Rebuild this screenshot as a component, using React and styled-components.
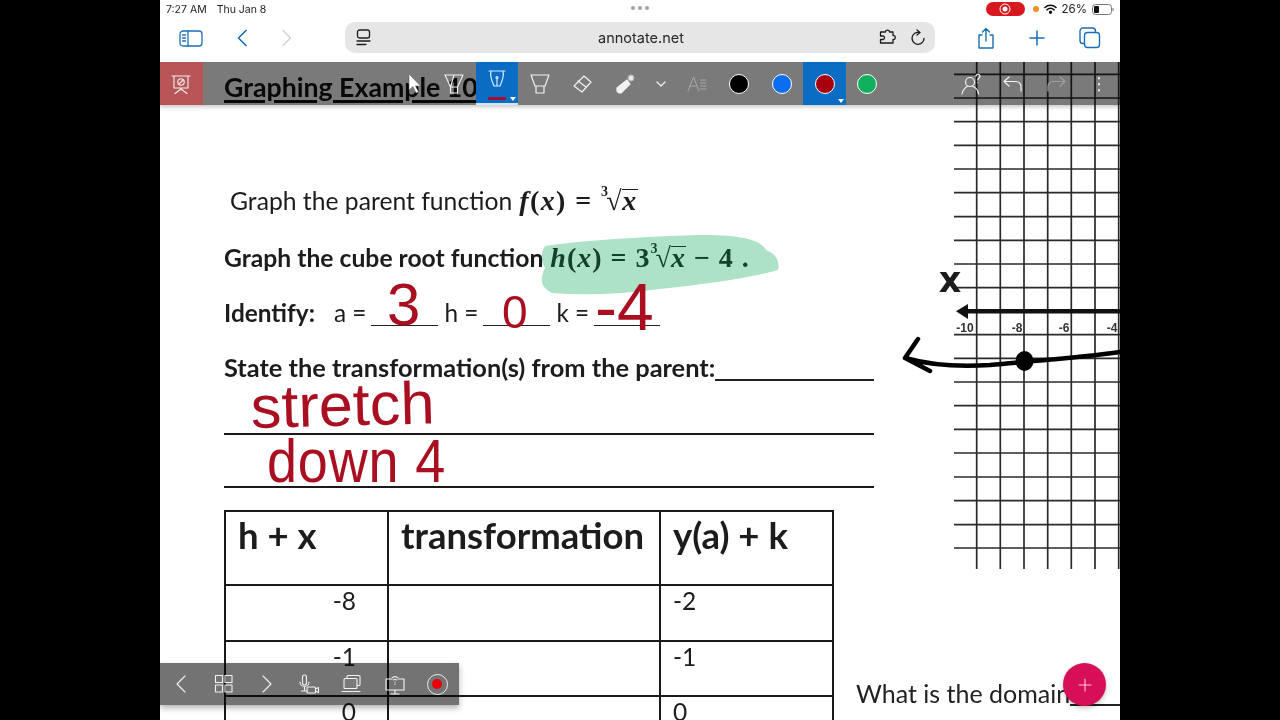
import React from "react";
import styled, { createGlobalStyle } from "styled-components";

const GlobalStyle = createGlobalStyle`
  html, body { margin: 0; padding: 0; background: #000; }
  body { font-family: "Lato", "Liberation Sans", sans-serif; }
`;

const Stage = styled.div`
  width: 1280px;
  height: 720px;
  background: #000;
  display: flex;
  justify-content: center;
  overflow: hidden;
`;

const Tablet = styled.div`
  position: relative;
  width: 960px;
  height: 720px;
  background: #fff;
  overflow: hidden;
  display: flex;
  flex-direction: column;
`;

/* ---------- iPad chrome ---------- */

const StatusBar = styled.div`
  flex: none;
  height: 18px;
  padding: 0 6px;
  display: flex;
  align-items: center;
  justify-content: space-between;
  font-family: "Inter", "Liberation Sans", sans-serif;
  font-size: 10.5px;
  color: #1c1c1c;
  position: relative;
`;

const StatusLeft = styled.div`
  display: flex;
  gap: 10px;
`;

const StatusRight = styled.div`
  display: flex;
  align-items: center;
  gap: 5px;
  font-size: 11.5px;
`;

const Dots = styled.div`
  position: absolute;
  left: 471px;
  top: 6px;
  display: flex;
  gap: 3px;
  span {
    width: 4px;
    height: 4px;
    border-radius: 50%;
    background: #a5a5a5;
  }
`;

const RecPill = styled.div`
  width: 39px;
  height: 14px;
  border-radius: 7px;
  background: #d8171f;
  display: flex;
  align-items: center;
  justify-content: center;
  margin-right: 3px;
`;

const OrangeDot = styled.div`
  width: 6px;
  height: 6px;
  border-radius: 50%;
  background: #f0921e;
`;

const NavBar = styled.div`
  flex: none;
  height: 44px;
  display: flex;
  align-items: flex-start;
  padding-top: 4px;
  box-sizing: border-box;
  color: #1b6fb8;
`;

const NavIcons = styled.div`
  width: 185px;
  height: 31px;
  display: flex;
  align-items: center;
  padding-left: 19px;
  gap: 33px;
  box-sizing: border-box;
`;

const AddressPill = styled.div`
  width: 590px;
  height: 31px;
  border-radius: 10px;
  background: #e6e6e6;
  display: grid;
  grid-template-columns: 1fr auto 1fr;
  align-items: center;
  padding: 0 9px 0 11px;
  box-sizing: border-box;
  color: #1f1f1f;
`;

const Url = styled.span`
  font-family: "Inter", "Liberation Sans", sans-serif;
  font-size: 14.5px;
  color: #262626;
`;

const PillGroup = styled.div`
  display: flex;
  align-items: center;
  justify-content: flex-end;
  gap: 10px;
`;

const PillStart = styled.div`
  display: flex;
  align-items: center;
`;

const NavRight = styled.div`
  flex: 1;
  height: 31px;
  display: flex;
  align-items: center;
  justify-content: space-between;
  padding: 0 19px 0 42px;
`;

/* ---------- annotate toolbar ---------- */

const AnnotateBar = styled.div`
  position: absolute;
  left: 0;
  top: 62px;
  width: 960px;
  height: 43px;
  display: flex;
  background: rgba(0, 0, 0, 0.52);
  box-shadow: 0 2px 4px rgba(0, 0, 0, 0.22);
`;

const BarCell = styled.div`
  position: relative;
  flex: none;
  box-sizing: border-box;
  width: ${(p) => p.$width || 42.65}px;
  height: 100%;
  display: flex;
  align-items: center;
  justify-content: center;
  background: ${(p) => (p.$active ? "#0a6cc2" : "transparent")};
  border-bottom: ${(p) => (p.$underline ? "2px solid #cfe6fb" : "none")};
`;

const PresentCell = styled(BarCell)`
  background: #b85556;
  margin-right: 230.5px;
`;

const RightTools = styled.div`
  margin-left: auto;
  display: flex;
`;

const PenNib = styled.div`
  margin-top: -5px;
  display: flex;
`;

const PenColor = styled.div`
  position: absolute;
  left: 12px;
  bottom: 3px;
  width: 18px;
  height: 3px;
  background: #a20f33;
`;

const Caret = styled.div`
  position: absolute;
  right: 2px;
  bottom: 2px;
  width: 0;
  height: 0;
  border-left: 3px solid transparent;
  border-right: 3px solid transparent;
  border-top: 4px solid #fff;
`;

const Swatch = styled.div`
  width: 18px;
  height: 18px;
  border-radius: 50%;
  background: ${(p) => p.$color};
  border: 1.5px solid #fff;
`;

const Cursor = styled.svg`
  position: absolute;
  left: 248px;
  top: 73px;
`;

/* ---------- worksheet ---------- */

const Worksheet = styled.div`
  position: relative;
  flex: 1;
  min-height: 0;
  display: flex;
  padding-left: 64px;
  color: #1c1c1c;
`;

const LeftCol = styled.div`
  width: 632px;
  flex: none;
`;

const RightCol = styled.div`
  flex: none;
  width: 264px;
`;

const TextRow = styled.div`
  height: 30px;
  line-height: 30px;
  white-space: nowrap;
  display: flex;
  align-items: baseline;
  font-size: ${(p) => p.$size || 24.7}px;
  font-weight: ${(p) => (p.$bold ? 700 : 400)};
  margin-top: ${(p) => p.$top || 0}px;
  margin-left: ${(p) => p.$left || 0}px;
`;

const Title = styled.div`
  margin-top: 10px;
  height: 30px;
  line-height: 30px;
  font-size: 26.7px;
  font-weight: 700;
  color: #111;
  text-decoration: underline;
  text-decoration-thickness: 3px;
  text-underline-offset: 3px;
  white-space: nowrap;
`;

const MathText = styled.span`
  font-family: "Liberation Serif", "DejaVu Serif", serif;
  font-weight: 700;
  font-size: 28px;
  margin-left: 7px;
  letter-spacing: ${(p) => p.$spacing || 1}px;
  color: ${(p) => p.$color || "inherit"};
  white-space: pre;
  i {
    font-style: italic;
  }
`;

const Radical = styled.span`
  display: inline-flex;
  align-items: baseline;
  font-style: normal;
`;

const RootIndex = styled.span`
  font-size: 14px;
  position: relative;
  top: -14px;
  margin-right: -3px;
`;

const RootBar = styled.i`
  border-top: 1.5px solid currentColor;
  line-height: 22px;
  margin-left: -1px;
`;

const Blank = styled.span`
  display: inline-block;
  flex: none;
  width: ${(p) => p.$width}px;
  border-bottom: ${(p) => p.$thick || 1.5}px solid #222;
  height: 20px;
  margin: 0 ${(p) => p.$gap || 0}px 0 ${(p) => p.$lead || 0}px;
  transform: translateY(${(p) => p.$drop || 4}px);
`;

const Spacer = styled.span`
  display: inline-block;
  width: ${(p) => p.$width}px;
`;

const Rule = styled.div`
  width: 650px;
  height: 2px;
  background: #1a1a1a;
  margin-top: 51px;
`;

const SheetTable = styled.div`
  width: 610px;
  margin-top: 22px;
  display: grid;
  grid-template-columns: 163px 272px 173px;
  grid-template-rows: 74px;
  grid-auto-rows: 55.5px;
  border-top: 2px solid #1a1a1a;
  border-left: 2px solid #1a1a1a;
  box-sizing: border-box;
`;

const HeadCell = styled.div`
  box-sizing: border-box;
  padding: 3px 0 0 12px;
  font-size: 36.5px;
  font-weight: 700;
  line-height: 40px;
  white-space: nowrap;
  border-right: 2px solid #1a1a1a;
  border-bottom: 2px solid #1a1a1a;
`;

const BodyCell = styled.div`
  box-sizing: border-box;
  padding: ${(p) => (p.$right ? "0 31px 0 0" : "0 0 0 12px")};
  text-align: ${(p) => (p.$right ? "right" : "left")};
  font-size: 24.5px;
  line-height: 30px;
  border-right: 2px solid #1a1a1a;
  border-bottom: 2px solid #1a1a1a;
`;

const GraphSvg = styled.svg`
  display: block;
  margin-left: 44px;
`;

const DomainRow = styled.div`
  margin-top: 108px;
  height: 30px;
  line-height: 30px;
  font-size: 25px;
  white-space: nowrap;
  color: #222;
  display: flex;
`;

const DomainBlank = styled.span`
  display: block;
  width: 80px;
  height: 26px;
  border-bottom: 2px solid #222;
`;

const Highlight = styled.svg`
  position: absolute;
  left: 375px;
  top: 170px;
  mix-blend-mode: multiply;
`;

/* handwriting that sits over the printed sheet */
const Ink = styled.span`
  position: absolute;
  left: ${(p) => p.$x}px;
  top: ${(p) => p.$y}px;
  font-family: "Liberation Sans", sans-serif;
  font-size: ${(p) => p.$size}px;
  line-height: 1;
  letter-spacing: ${(p) => p.$spacing || 0}px;
  color: #a90f20;
  white-space: pre;
  transform: scale(${(p) => p.$sx || 1}, ${(p) => p.$sy || 1}) rotate(${(p) => p.$rot || 0}deg);
  transform-origin: left top;
`;

/* ---------- bottom tools ---------- */

const BottomBar = styled.div`
  position: absolute;
  left: 0;
  top: 663px;
  width: 299px;
  height: 42px;
  display: flex;
  background: rgba(0, 0, 0, 0.55);
  box-shadow: 0 3px 6px rgba(0, 0, 0, 0.3);
`;

const BottomCell = styled.div`
  flex: none;
  width: 42.7px;
  height: 100%;
  display: flex;
  align-items: center;
  justify-content: center;
`;

const RecordOuter = styled.div`
  width: 19px;
  height: 19px;
  border: 1.2px solid #eee;
  border-radius: 50%;
  display: flex;
  align-items: center;
  justify-content: center;
  &::after {
    content: "";
    width: 10px;
    height: 10px;
    border-radius: 50%;
    background: #e8000c;
  }
`;

const Fab = styled.div`
  position: absolute;
  left: 903px;
  top: 663px;
  width: 43px;
  height: 43px;
  border-radius: 50%;
  background: #d60f58;
  box-shadow: 0 2px 5px rgba(0, 0, 0, 0.25);
  display: flex;
  align-items: center;
  justify-content: center;
`;

/* ---------- icons ---------- */

const Icon = ({ size = 24, w, h, color = "currentColor", sw = 1.5, children }) => (
  <svg width={w || size} height={h || size} viewBox={`0 0 ${w || size} ${h || size}`} fill="none" stroke={color} strokeWidth={sw} strokeLinecap="round" strokeLinejoin="round">
    {children}
  </svg>
);

const white = "#f2f2f2";

const CubeRoot = ({ v = "x" }) => (
  <Radical>
    <RootIndex>3</RootIndex>√<RootBar>{v}</RootBar>
  </Radical>
);

const tableRows = [
  ["-8", "-2"],
  ["-1", "-1"],
  ["0", "0"],
];

const hLines = [74.3, 98, 121.7, 145.3, 169, 192.7, 216.7, 240.3, 264, 287.7, 334.7, 358.3, 382, 405.7, 429.4, 453, 477, 500.7, 524.7, 548];
const vLines = [976.7, 1000.3, 1024, 1047.7, 1071.3, 1095, 1118.7];
const axisLabels = [["-10", 965], ["-8", 1017], ["-6", 1064], ["-4", 1112]];

const Graph = () => (
  <GraphSvg width="220" height="508" viewBox="900 62 220 508">
    <g stroke="#2a2a2a" strokeWidth="1.7">
      {hLines.map((y) => <line key={y} x1="954" x2="1120" y1={y} y2={y} />)}
      {vLines.map((x) => <line key={x} x1={x} x2={x} y1="62" y2="569" />)}
    </g>
    <path d="M956 311.3 L968 304 V319 Z" fill="#111" />
    <line x1="965" x2="1120" y1="311.3" y2="311.3" stroke="#111" strokeWidth="4.5" />
    <text x="950" y="292" textAnchor="middle" fontFamily="DejaVu Sans" fontWeight="700" fontSize="35" fill="#1c1c1c">x</text>
    {axisLabels.map(([t, x]) => (
      <text key={t} x={x} y="332" textAnchor="middle" fontFamily="Liberation Sans" fontWeight="700" fontSize="12" fill="#333">{t}</text>
    ))}
    <path d="M918 339 L905 358 L930 371 M905 358 C930 365 960 367 990 365 C1030 361 1080 358 1120 352" stroke="#000" strokeWidth="4.5" fill="none" strokeLinecap="round" strokeLinejoin="round" />
    <ellipse cx="1024.5" cy="361" rx="9" ry="10" fill="#000" />
  </GraphSvg>
);

export default function App() {
  return (
    <Stage>
      <GlobalStyle />
      <Tablet>
        <StatusBar>
          <StatusLeft>
            <span>7:27 AM</span>
            <span>Thu Jan 8</span>
          </StatusLeft>
          <Dots><span /><span /><span /></Dots>
          <StatusRight>
            <RecPill>
              <svg width="12" height="12" viewBox="0 0 12 12" fill="none">
                <circle cx="6" cy="6" r="5" stroke="#fff" strokeWidth="1" />
                <circle cx="6" cy="6" r="2.5" fill="#fff" />
              </svg>
            </RecPill>
            <OrangeDot />
            <svg width="13" height="10" viewBox="0 0 13 10" fill="none" stroke="#111" strokeWidth="1.6" strokeLinecap="round">
              <path d="M1 3.5a8 8 0 0 1 11 0M3 5.8a5 5 0 0 1 7 0" />
              <circle cx="6.5" cy="8.3" r="0.9" fill="#111" />
            </svg>
            <span>26%</span>
            <svg width="22" height="11" viewBox="0 0 22 11" fill="none">
              <rect x="0.5" y="0.5" width="19" height="10" rx="3" stroke="#777" />
              <rect x="2" y="2" width="5" height="7" rx="1" fill="#111" />
              <path d="M21 4v3" stroke="#888" strokeWidth="1.2" />
            </svg>
          </StatusRight>
        </StatusBar>

        <NavBar>
          <NavIcons>
            <Icon w={24} h={18} sw={1.3}>
              <rect x="1" y="2" width="22" height="15" rx="3" />
              <path d="M9 2v15M3.5 6h3M3.5 9h3M3.5 12h3" />
            </Icon>
            <Icon w={12} h={18} sw={1.7}>
              <path d="M10 1.5L2.5 9l7.5 7.5" />
            </Icon>
            <Icon w={12} h={18} sw={1.4} color="#d2d2d2">
              <path d="M2 1.5L9.5 9 2 16.5" />
            </Icon>
          </NavIcons>
          <AddressPill>
            <PillStart>
              <Icon w={15} h={17} sw={1.3} color="#1c1c1c">
                <rect x="1.5" y="1" width="12" height="8" rx="2" />
                <path d="M1 12h13M1 15.5h9" />
              </Icon>
            </PillStart>
            <Url>annotate.net</Url>
            <PillGroup>
              <Icon w={20} h={17} sw={1.3} color="#1c1c1c">
                <path d="M1.5 3h5c0-2.500 4-2.500 4 0h3.500v3.500c3-.5 3 4.500 0 4v3.500h-12.500v-3.500h3a2 2 0 0 0 0-3.500h-3z" />
              </Icon>
              <Icon w={17} h={18} sw={1.3} color="#1c1c1c">
                <path d="M10.500 3.500A6 6 0 1 0 15 9.500M8 1l3 2.500-3 2.500" />
              </Icon>
            </PillGroup>
          </AddressPill>
          <NavRight>
            <Icon w={18} h={22} sw={1.4}>
              <path d="M5 8H2v13h14V8h-3M9 14V1.500M5.500 5L9 1.500 12.500 5" />
            </Icon>
            <Icon w={18} h={18} sw={1.5}>
              <path d="M9 2v14M2 9h14" />
            </Icon>
            <Icon w={22} h={22} sw={1.4}>
              <rect x="5.500" y="5.500" width="15" height="15" rx="3" />
              <path d="M5.500 16.500H4a3 3 0 0 1-3-3V4a3 3 0 0 1 3-3h9.500a3 3 0 0 1 3 3v1.500" />
            </Icon>
          </NavRight>
        </NavBar>

        <Worksheet>
          <LeftCol>
            <Title>Graphing Example 10</Title>
            <TextRow $top={84} $left={6}>
              Graph the parent function
              <MathText $spacing={1.4}><i>f</i>(<i>x</i>) = <CubeRoot /></MathText>
            </TextRow>
            <TextRow $top={27} $bold>
              Graph the cube root function
              <MathText $color="#1d4a34"><i>h</i>(<i>x</i>) = 3<CubeRoot /> − 4 .</MathText>
            </TextRow>
            <TextRow $top={25} $size={24.4}>
              <b>Identify:</b>
              <Spacer $width={19} />
              a =
              <Blank $width={67} $lead={5} $gap={6} />
              h =
              <Blank $width={67} $lead={5} $gap={6} />
              k =
              <Blank $width={66} $lead={5} />
            </TextRow>
            <TextRow $top={24} $bold $size={25.4}>
              State the transformation(s) from the parent:
              <Blank $width={159} $thick={2} />
            </TextRow>
            <Rule />
            <Rule />
            <SheetTable>
              <HeadCell>h + x</HeadCell>
              <HeadCell>transformation</HeadCell>
              <HeadCell>y(a) + k</HeadCell>
              {tableRows.map(([x, y]) => (
                <React.Fragment key={x}>
                  <BodyCell $right>{x}</BodyCell>
                  <BodyCell />
                  <BodyCell>{y}</BodyCell>
                </React.Fragment>
              ))}
            </SheetTable>
          </LeftCol>
          <RightCol>
            <Graph />
            <DomainRow>
              What is the domain
              <DomainBlank />
            </DomainRow>
          </RightCol>

          <Highlight width="250" height="70" viewBox="535 232 250 70">
            <path d="M545 246 Q600 238 700 235 Q758 234 766 250 Q781 256 778 270 Q740 281 660 289 Q600 297 552 293 Q536 286 545 268 Q538 256 545 246 Z" fill="#aee2c6" />
          </Highlight>
          <Ink $x={227} $y={213} $size={60}>3</Ink>
          <Ink $x={342} $y={227} $size={46}>0</Ink>
          <Ink $x={435} $y={212} $size={66}>-4</Ink>
          <Ink $x={90} $y={316} $size={60} $sx={1.02} $rot={-1.5}>stretch</Ink>
          <Ink $x={107} $y={368} $size={62} $sx={0.87} $spacing={1}>down 4</Ink>
        </Worksheet>

        <AnnotateBar>
          <PresentCell>
            <Icon w={24} h={24} color={white} sw={1.1}>
              <path d="M3 4h18M5 4v12h14V4M12 16v1M12 17l-6 4.500M12 17l6 4.500" />
              <circle cx="12" cy="10" r="3.200" />
              <path d="M10 12l4-4" />
            </Icon>
          </PresentCell>
          <BarCell>
            <Icon w={24} h={24} color={white} sw={1.1}>
              <path d="M3 3h18l-5.500 12h-7zM8.500 15v6h7v-6M12 3l-3.500 12" />
            </Icon>
          </BarCell>
          <BarCell $active $underline>
            <PenNib>
              <Icon w={24} h={24} color="#d8ecfb" sw={1.2}>
                <path d="M4 3h16M6 3.500C4.500 8 7 13 9 18h6c2-5 4.500-10 3-14.500M12 18V10" />
                <circle cx="12" cy="9.500" r="1" />
              </Icon>
            </PenNib>
            <PenColor />
            <Caret />
          </BarCell>
          <BarCell>
            <Icon w={24} h={24} color={white} sw={1.2}>
              <path d="M3 3h18l-4 11H7zM8 14v7h8v-7" />
            </Icon>
          </BarCell>
          <BarCell>
            <Icon w={24} h={24} color={white} sw={1.2}>
              <path d="M14 4l7 6-9 10-8-6zM8 9l8 6" />
            </Icon>
          </BarCell>
          <BarCell>
            <Icon w={24} h={24} color={white} sw={1.2}>
              <path d="M4 16l10-8 3 4-9 9H6l-2-2z" fill={white} />
              <path d="M18 3v6M15 6h6M16 4l4 4M20 4l-4 4" />
            </Icon>
          </BarCell>
          <BarCell $width={29}>
            <Icon w={10} h={6} color={white} sw={1.2}>
              <path d="M1 1l4 4 4-4" />
            </Icon>
          </BarCell>
          <BarCell>
            <Icon w={20} h={18} color="#a8a8a8" sw={1}>
              <path d="M1 16L6.500 2 12 16M3 11h7M13.500 5H19M13.500 8H19M13.500 11H19M13.500 14H19" />
            </Icon>
          </BarCell>
          <BarCell><Swatch $color="#000" /></BarCell>
          <BarCell><Swatch $color="#0b6ef0" /></BarCell>
          <BarCell $active>
            <Swatch $color="#a6000c" />
            <Caret />
          </BarCell>
          <BarCell><Swatch $color="#10b05c" /></BarCell>
          <RightTools>
            <BarCell>
              <Icon w={22} h={22} color={white} sw={1.2}>
                <circle cx="10" cy="9" r="4.500" />
                <path d="M2 21c1-5 4-7 6-8M12 13c3 1 6 3 6.500 8M16 3a2 2 0 1 1 3 2c-1 .6-1.200 1-1.200 2M17.800 9.500v.2" />
              </Icon>
            </BarCell>
            <BarCell>
              <Icon w={20} h={16} color={white} sw={1.2}>
                <path d="M6 1L1 5.500 6 10M1 5.500h12a5 5 0 0 1 5 5V15" />
              </Icon>
            </BarCell>
            <BarCell>
              <Icon w={20} h={16} color="#a0a0a0" sw={1.2}>
                <path d="M14 1l5 4.500L14 10M19 5.500H7a5 5 0 0 0-5 5V15" />
              </Icon>
            </BarCell>
            <BarCell>
              <Icon w={4} h={16} color={white} sw={2}>
                <path d="M2 2v.5M2 8v.5M2 14v.5" />
              </Icon>
            </BarCell>
          </RightTools>
        </AnnotateBar>

        <Cursor width="14" height="22" viewBox="0 0 14 22">
          <path d="M1 1v16l4-3.500 3 6.500 2.500-1-3-6 5 0z" fill="#fff" stroke="#555" strokeWidth="0.5" />
        </Cursor>

        <BottomBar>
          <BottomCell>
            <Icon w={12} h={20} color={white} sw={1.1}>
              <path d="M10 2L2 10l8 8" />
            </Icon>
          </BottomCell>
          <BottomCell>
            <Icon w={20} h={20} color={white} sw={1.1}>
              <rect x="1.500" y="1.500" width="7" height="7" />
              <rect x="11" y="1.500" width="7" height="7" />
              <rect x="1.500" y="11" width="7" height="7" />
              <rect x="11" y="11" width="7" height="7" />
            </Icon>
          </BottomCell>
          <BottomCell>
            <Icon w={12} h={20} color={white} sw={1.1}>
              <path d="M2 2l8 8-8 8" />
            </Icon>
          </BottomCell>
          <BottomCell>
            <Icon w={22} h={20} color={white} sw={1.1}>
              <rect x="4.500" y="1" width="4" height="10" rx="2" />
              <path d="M2 8a4.500 4.500 0 0 0 9 0M6.500 13v4M3.500 17h6" />
              <rect x="9" y="13" width="8.500" height="6" rx="1" />
              <path d="M17.500 15l3-1.500v5l-3-1.500" />
            </Icon>
          </BottomCell>
          <BottomCell>
            <Icon w={22} h={20} color={white} sw={1.1}>
              <rect x="6" y="1.500" width="13" height="10" rx="1" />
              <rect x="3" y="4.500" width="13" height="10" rx="1" fill="#7a7a7a" />
              <path d="M1 17.500h18" />
            </Icon>
          </BottomCell>
          <BottomCell>
            <Icon w={22} h={22} color={white} sw={1.1}>
              <path d="M8 6H2v11h18V6h-6M11 17v3M7 21h8" />
              <path d="M8 5a4 4 0 0 1 6 0M9.500 7a2 2 0 0 1 3 0" />
              <path d="M11 9v.2M11 11v.5" />
            </Icon>
          </BottomCell>
          <BottomCell>
            <RecordOuter />
          </BottomCell>
        </BottomBar>

        <Fab>
          <Icon w={14} h={14} color="#f7c9dc" sw={1.1}>
            <path d="M7 1v12M1 7h12" />
          </Icon>
        </Fab>
      </Tablet>
    </Stage>
  );
}
